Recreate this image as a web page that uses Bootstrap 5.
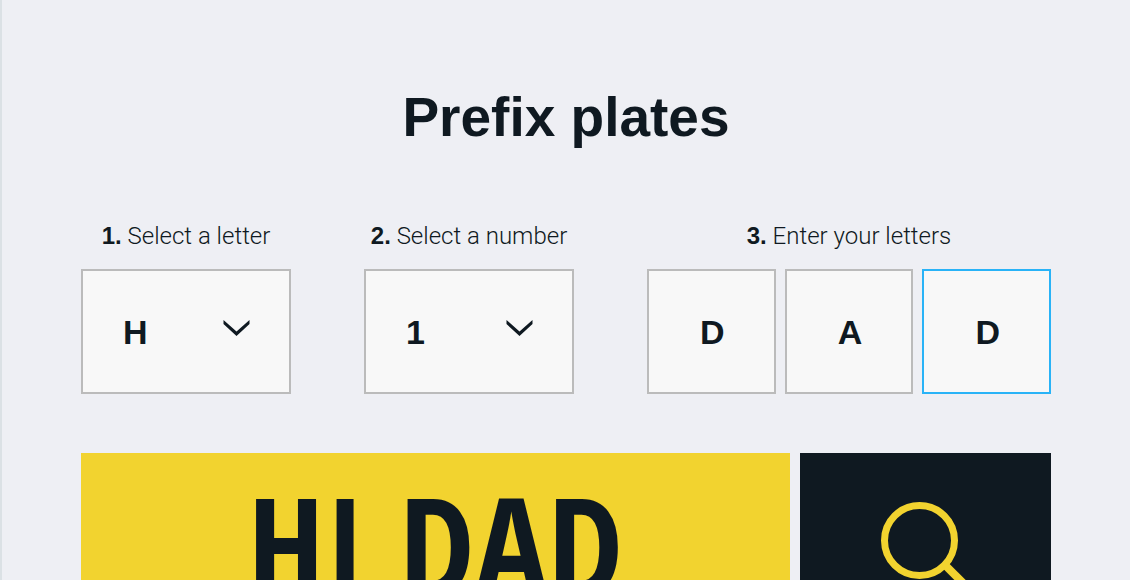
<!DOCTYPE html>
<html lang="en">
<head>
<meta charset="utf-8">
<meta name="viewport" content="width=device-width, initial-scale=1">
<title>Prefix plates</title>
<link href="https://cdn.jsdelivr.net/npm/bootstrap@5.3.0/dist/css/bootstrap.min.css" rel="stylesheet">
<style>
  :root { --ink: #0f1921; --plate: #f2d32f; }
  html { scrollbar-width: none; }
  body {
    background: #eeeff4;
    color: var(--ink);
    font-family: "Liberation Sans", Arial, sans-serif;
    border-left: 2px solid #dbe1e5;
  }
  .finder { max-width: 970px; padding-top: 83px; }
  .finder-title { font-size: 55px; line-height: 68px; margin-bottom: 67px; }
  .steps { display: grid; grid-template-columns: 210fr 210fr 404fr; gap: 73px; }
  .step-label {
    font-family: Roboto, "Liberation Sans", sans-serif;
    font-size: 24px; line-height: 36px; font-weight: 300;
    margin-bottom: 15px;
  }
  .step-label b { font-family: "Liberation Sans", Arial, sans-serif; font-weight: 700; }
  .field-box, .field-box:focus {
    height: 125px;
    border: 2px solid #bbb;
    border-radius: 0;
    background-color: #f8f8f8;
    color: var(--ink);
    font-size: 34px; font-weight: 700;
    box-shadow: none;
  }
  input.field-box { padding: 8px 12px 6px 14px; }
  select.field-box {
    padding: 2px 72px 0 40px;
    background-image: url("data:image/svg+xml,%3Csvg xmlns='http://www.w3.org/2000/svg' viewBox='0 0 27 16'%3E%3Cpath d='M0.5 0 L13.5 11.6 L26.5 0 V4 L13.5 16 L0.5 4Z' fill='%230f1921'/%3E%3C/svg%3E");
    background-size: 27px 16px;
    background-position: right 39px top 49px;
  }
  .field-box.current { border-color: #29b3f7; }
  .letters { gap: 9px; }
  .result { display: grid; grid-template-columns: 709fr 251fr; gap: 10px; margin-top: 59px; }
  .plate-view {
    background: var(--plate);
    min-height: 188px;
    font-family: "Open Sans Condensed", "Roboto Condensed", "Arial Narrow", sans-serif;
    font-size: 136px; line-height: 184px; font-weight: 700;
  }
  .search-btn, .search-btn:hover { background: var(--ink); color: var(--plate); }
</style>
</head>
<body>
<main class="finder mx-auto">
  <h1 class="finder-title text-center fw-bold">Prefix plates</h1>
  <form>
    <div class="steps">
      <div>
        <label class="step-label d-block text-center text-nowrap" for="prefix"><b>1.</b> Select a letter</label>
        <select class="form-select field-box" id="prefix"><option>H</option><option>J</option><option>K</option></select>
      </div>
      <div>
        <label class="step-label d-block text-center text-nowrap" for="number"><b>2.</b> Select a number</label>
        <select class="form-select field-box" id="number"><option>1</option><option>2</option><option>3</option></select>
      </div>
      <div>
        <label class="step-label d-block text-center text-nowrap" for="letter1"><b>3.</b> Enter your letters</label>
        <div class="letters d-flex">
          <input class="form-control field-box text-center" id="letter1" maxlength="1" value="D">
          <input class="form-control field-box text-center" aria-label="Second letter" maxlength="1" value="A">
          <input class="form-control field-box text-center current" aria-label="Third letter" maxlength="1" value="D">
        </div>
      </div>
    </div>
    <div class="result">
      <output class="plate-view d-block text-center text-nowrap" for="prefix number letter1">HI DAD</output>
      <button class="search-btn btn rounded-0 border-0 p-0 d-flex align-items-center justify-content-center" type="submit" aria-label="Search">
        <svg width="92" height="92" viewBox="0 0 92 92" fill="none" stroke="currentColor" stroke-width="7" aria-hidden="true">
          <circle cx="39.5" cy="39.5" r="35"/>
          <path d="M64 63 L91 90" stroke-width="8"/>
        </svg>
      </button>
    </div>
  </form>
</main>
<script src="https://cdn.jsdelivr.net/npm/bootstrap@5.3.0/dist/js/bootstrap.bundle.min.js"></script>
</body>
</html>
